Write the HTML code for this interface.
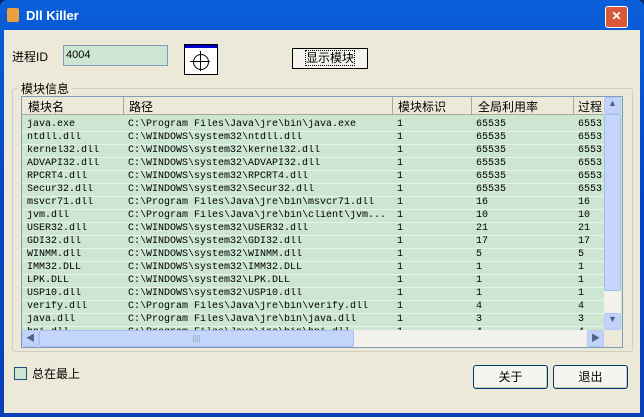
<html><head><style>
body{margin:0;width:644px;height:417px;overflow:hidden;font-family:"Liberation Sans","Noto Sans CJK SC",sans-serif;font-size:12px;background:#0a246a}
.win{position:absolute;left:0;top:0;width:644px;height:417px;background:linear-gradient(#0a5fd8,#0343c6 50%,#0a3fb8);border-radius:7px 7px 0 0}
.title{position:absolute;left:26px;top:8px;color:#fff;font-weight:bold;font-size:13px}
.client{position:absolute;left:4px;top:30px;width:636px;height:383px;background:#ece9d8}
.abs{position:absolute}
.btn{position:absolute;background:#f5f4ee;border:1px solid #003c74;border-radius:3px;text-align:center;line-height:22px;font-size:12px;box-shadow:inset -1px -1px 0 #c9c5b4}
table{border-collapse:collapse;table-layout:fixed;width:591px;font-family:"Liberation Mono","Noto Serif CJK SC",monospace;font-size:10px}
td{height:12px;padding:0 0 0 5px;border-bottom:1px solid #e8f3ea;white-space:nowrap;overflow:hidden;line-height:12px;text-align:left}
</style></head><body>
<div class="win">
<div class="abs" style="left:7px;top:8px;width:12px;height:14px;background:#e8a040;border-radius:2px"></div>
<div class="title">Dll Killer</div>
<div class="abs" style="left:605px;top:6px;width:21px;height:20px;background:#d8593a;border:1px solid #fff;border-radius:3px;color:#fff;text-align:center;font-weight:bold;line-height:19px">✕</div>
<div class="client">
<div class="abs" style="left:8px;top:18px">进程ID</div>
<div class="abs" style="left:59px;top:15px;width:105px;height:21px;background:#cde6d2;border:1px solid #7f9db9;box-sizing:border-box;font-size:11px;padding:3px 2px">4004</div>
<div class="abs" style="left:180px;top:14px;width:34px;height:31px;background:#fff;border:1px solid #000;box-sizing:border-box">
 <div style="height:3px;background:#00c;margin:0"></div>
 <div style="position:absolute;left:8px;top:9px;width:14px;height:14px;border:1px solid #000;border-radius:50%"></div>
 <div style="position:absolute;left:15px;top:6px;width:1px;height:20px;background:#000"></div>
 <div style="position:absolute;left:5px;top:16px;width:20px;height:1px;background:#000"></div>
</div>
<div class="abs" style="left:288px;top:18px;width:74px;height:19px;border:1px solid #000;background:#f5f4ee;text-align:center;line-height:19px;font-size:12px"><span style="outline:1px dotted #000">显示模块</span></div>
<div class="abs" style="left:8px;top:58px;width:619px;height:262px;border:1px solid #d0d0bf;border-radius:3px"></div>
<div class="abs" style="left:14px;top:50px;background:#ece9d8;padding:0 3px">模块信息</div>
<div class="abs" style="left:17px;top:66px;width:600px;height:250px;border:1px solid #7f9db9;background:#cde6d2;overflow:hidden">
 <div class="abs" style="left:0;top:0;width:582px;height:17px;background:#ece9d8;border-bottom:1px solid #aca899;font-size:12px">
  <div class="abs" style="left:6px;top:1px">模块名</div><div class="abs" style="left:101px;top:0;width:1px;height:17px;background:#aca899"></div>
  <div class="abs" style="left:107px;top:1px">路径</div><div class="abs" style="left:370px;top:0;width:1px;height:17px;background:#aca899"></div>
  <div class="abs" style="left:376px;top:1px">模块标识</div><div class="abs" style="left:449px;top:0;width:1px;height:17px;background:#aca899"></div>
  <div class="abs" style="left:456px;top:1px">全局利用率</div><div class="abs" style="left:551px;top:0;width:1px;height:17px;background:#aca899"></div>
  <div class="abs" style="left:556px;top:1px">过程</div>
 </div>
 <div class="abs" style="left:0;top:22px;width:582px;height:211px;overflow:hidden">
 <table><colgroup><col style="width:101px"><col style="width:269px"><col style="width:79px"><col style="width:102px"><col style="width:40px"></colgroup>
 <tr><td>java.exe</td><td>C:\Program Files\Java\jre\bin\java.exe</td><td>1</td><td>65535</td><td>6553</td></tr>
 <tr><td>ntdll.dll</td><td>C:\WINDOWS\system32\ntdll.dll</td><td>1</td><td>65535</td><td>6553</td></tr>
 <tr><td>kernel32.dll</td><td>C:\WINDOWS\system32\kernel32.dll</td><td>1</td><td>65535</td><td>6553</td></tr>
 <tr><td>ADVAPI32.dll</td><td>C:\WINDOWS\system32\ADVAPI32.dll</td><td>1</td><td>65535</td><td>6553</td></tr>
 <tr><td>RPCRT4.dll</td><td>C:\WINDOWS\system32\RPCRT4.dll</td><td>1</td><td>65535</td><td>6553</td></tr>
 <tr><td>Secur32.dll</td><td>C:\WINDOWS\system32\Secur32.dll</td><td>1</td><td>65535</td><td>6553</td></tr>
 <tr><td>msvcr71.dll</td><td>C:\Program Files\Java\jre\bin\msvcr71.dll</td><td>1</td><td>16</td><td>16</td></tr>
 <tr><td>jvm.dll</td><td>C:\Program Files\Java\jre\bin\client\jvm...</td><td>1</td><td>10</td><td>10</td></tr>
 <tr><td>USER32.dll</td><td>C:\WINDOWS\system32\USER32.dll</td><td>1</td><td>21</td><td>21</td></tr>
 <tr><td>GDI32.dll</td><td>C:\WINDOWS\system32\GDI32.dll</td><td>1</td><td>17</td><td>17</td></tr>
 <tr><td>WINMM.dll</td><td>C:\WINDOWS\system32\WINMM.dll</td><td>1</td><td>5</td><td>5</td></tr>
 <tr><td>IMM32.DLL</td><td>C:\WINDOWS\system32\IMM32.DLL</td><td>1</td><td>1</td><td>1</td></tr>
 <tr><td>LPK.DLL</td><td>C:\WINDOWS\system32\LPK.DLL</td><td>1</td><td>1</td><td>1</td></tr>
 <tr><td>USP10.dll</td><td>C:\WINDOWS\system32\USP10.dll</td><td>1</td><td>1</td><td>1</td></tr>
 <tr><td>verify.dll</td><td>C:\Program Files\Java\jre\bin\verify.dll</td><td>1</td><td>4</td><td>4</td></tr>
 <tr><td>java.dll</td><td>C:\Program Files\Java\jre\bin\java.dll</td><td>1</td><td>3</td><td>3</td></tr>
 <tr><td>hpi.dll</td><td>C:\Program Files\Java\jre\bin\hpi.dll</td><td>1</td><td>4</td><td>4</td></tr>
 </table></div>
 <div class="abs" style="left:582px;top:0;width:17px;height:233px;background:#f3f1ec">
  <div class="abs" style="left:0;top:0;width:15px;height:15px;background:#c1d3fb;border:1px solid #b6c9f5;border-radius:2px;font-size:9px;text-align:center;color:#4d6185">▲</div>
  <div class="abs" style="left:0;top:17px;width:15px;height:175px;background:#c4d6fc;border:1px solid #a6bdf0;border-radius:2px"></div>
  <div class="abs" style="left:0;top:216px;width:15px;height:15px;background:#c1d3fb;border:1px solid #b6c9f5;border-radius:2px;font-size:9px;text-align:center;color:#4d6185">▼</div>
 </div>
 <div class="abs" style="left:0;top:233px;width:582px;height:17px;background:#f3f1ec">
  <div class="abs" style="left:0;top:0;width:15px;height:15px;background:#c1d3fb;border:1px solid #b6c9f5;border-radius:2px;font-size:9px;text-align:center;color:#4d6185;line-height:15px">◀</div>
  <div class="abs" style="left:17px;top:0;width:313px;height:15px;background:#c4d6fc;border:1px solid #a6bdf0;border-radius:2px;text-align:center;font-size:8px;color:#8aa;line-height:15px">||||</div>
  <div class="abs" style="left:565px;top:0;width:15px;height:15px;background:#c1d3fb;border:1px solid #b6c9f5;border-radius:2px;font-size:9px;text-align:center;color:#4d6185;line-height:15px">▶</div>
 </div>
 <div class="abs" style="left:582px;top:233px;width:18px;height:17px;background:#ece9d8"></div>
</div>
<div class="abs" style="left:10px;top:337px;width:11px;height:11px;border:1px solid #1c5180;background:#cde6d2"></div>
<div class="abs" style="left:28px;top:335px">总在最上</div>
<div class="btn" style="left:469px;top:335px;width:73px;height:22px">关于</div>
<div class="btn" style="left:549px;top:335px;width:73px;height:22px">退出</div>
</div>
</div>
</body></html>
